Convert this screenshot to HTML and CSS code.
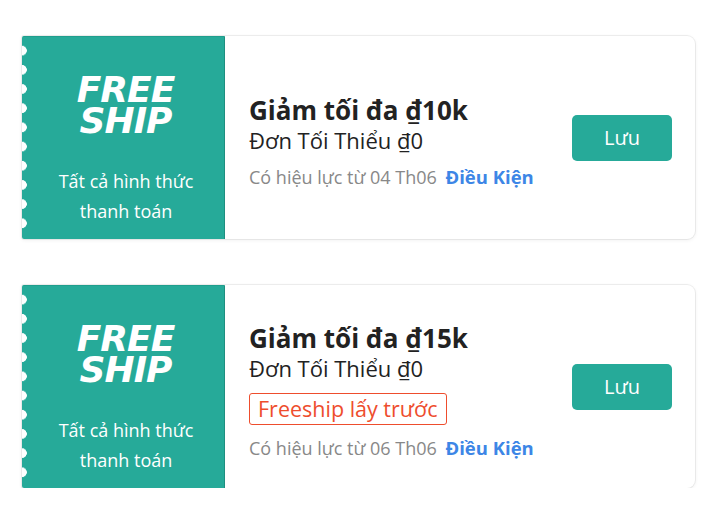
FILE: index.html
```html
<!DOCTYPE html>
<html lang="vi">
<head>
<meta charset="utf-8">
<link rel="stylesheet" href="styles.css">
</head>
<body>
<div class="list">
  <div class="voucher">
    <div class="stub">
      <div class="logo"><span>FREE</span><span>SHIP</span></div>
      <div class="stub-text">Tất cả hình thức<br>thanh toán</div>
    </div>
    <div class="body">
      <div class="info">
        <div class="title">Giảm tối đa ₫10k</div>
        <div class="min">Đơn Tối Thiểu ₫0</div>
        <div class="date">Có hiệu lực từ 04 Th06 <a class="terms">Điều Kiện</a></div>
      </div>
      <button class="save">Lưu</button>
    </div>
  </div>
  <div class="voucher">
    <div class="stub">
      <div class="logo"><span>FREE</span><span>SHIP</span></div>
      <div class="stub-text">Tất cả hình thức<br>thanh toán</div>
    </div>
    <div class="body">
      <div class="info info-tag">
        <div class="title">Giảm tối đa ₫15k</div>
        <div class="min">Đơn Tối Thiểu ₫0</div>
        <div class="tag">Freeship lấy trước</div>
        <div class="date">Có hiệu lực từ 06 Th06 <a class="terms">Điều Kiện</a></div>
      </div>
      <button class="save">Lưu</button>
    </div>
  </div>
</div>
</body>
</html>
```
FILE: styles.css
```css
html, body {
  margin: 0;
  padding: 0;
  background: #fff;
}
body {
  font-family: "Open Sans", "Noto Sans", sans-serif;
}
.list {
  display: flex;
  flex-direction: column;
  gap: 46px;
  padding: 36px 0 0 22px;
  width: 673px;
}
.voucher {
  display: flex;
  height: 203px;
  background: #fff;
  border-radius: 2px 8px 8px 2px;
  box-shadow: 0 0 0 1px rgba(0,0,0,0.06), 0 1px 4px rgba(0,0,0,0.07);
}
.stub {
  position: relative;
  width: 203px;
  flex: none;
  background: #26aa99;
  border-right: 1px solid #1e8f80;
  border-top: 1px solid #1f9e8d;
  border-radius: 2px 0 0 2px;
  box-sizing: border-box;
  display: flex;
  flex-direction: column;
  align-items: center;
  padding-top: 37px;
  color: #fff;
}
.stub::before {
  content: "";
  position: absolute;
  left: 0;
  top: 4px;
  width: 8px;
  height: 192px;
  background: radial-gradient(circle at 0 50%, #fff 4.5px, rgba(255,255,255,0) 5.1px) 0 0 / 8px 19.2px repeat-y;
}
.logo {
  display: flex;
  flex-direction: column;
  align-items: center;
  font-family: "DejaVu Sans", sans-serif;
  font-weight: 700;
  font-style: italic;
  font-size: 36px;
  line-height: 31px;
  letter-spacing: -1px;
  padding-left: 5px;
}
.stub-text {
  margin-top: 30px;
  font-size: 18px;
  line-height: 30px;
  text-align: center;
  padding-left: 6px;
}
.body {
  flex: 1;
  display: flex;
  align-items: center;
  justify-content: space-between;
  padding: 0 23px 0 24px;
}
.info {
  display: flex;
  flex-direction: column;
  align-items: flex-start;
  padding-top: 8px;
}
.info-tag {
  padding-top: 8px;
}
.title {
  font-size: 26px;
  font-weight: 700;
  line-height: 32px;
  color: #222;
}
.min {
  font-size: 22px;
  line-height: 28px;
  color: #222;
}
.tag {
  margin-top: 11px;
  font-size: 21.5px;
  line-height: 30px;
  color: #ee4d2d;
  border: 1px solid #ee4d2d;
  border-radius: 3px;
  padding: 0 8px;
}
.date {
  margin-top: 11px;
  font-size: 18px;
  line-height: 24px;
  color: #888;
}
.terms {
  margin-left: 4px;
  font-size: 18.5px;
  color: #3d86e6;
  font-weight: 700;
}
.save {
  width: 100px;
  height: 46px;
  border: none;
  border-radius: 5px;
  background: #26aa99;
  color: #fff;
  font-family: inherit;
  font-size: 20px;
  cursor: pointer;
}
```
